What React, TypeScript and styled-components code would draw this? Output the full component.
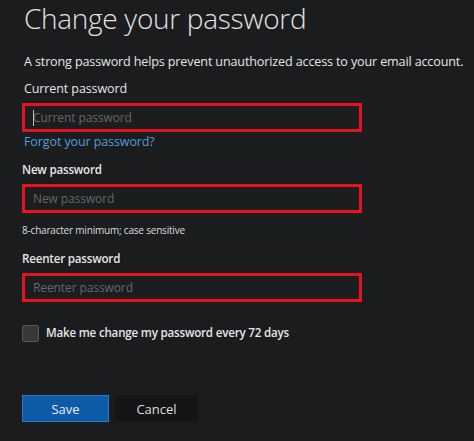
import styled, { createGlobalStyle } from 'styled-components';

const GlobalStyle = createGlobalStyle`
  html, body {
    margin: 0;
    padding: 0;
    background: #1b1c1e;
  }
  body {
    font-family: 'Open Sans', 'Noto Sans', sans-serif;
    color: #e4e4e4;
  }
`;

const App = () => {
  return (
    <>
      <GlobalStyle />
      <Page>
        <Title>Change your password</Title>
        <Description>
          A strong password helps prevent unauthorized access to your email account.
        </Description>

        <Label>Current password</Label>
        <Field>
          <Caret />
          <Input placeholder="Current password" type="password" />
        </Field>
        <ForgotLink href="#">Forgot your password?</ForgotLink>

        <Label $bold>New password</Label>
        <Field>
          <Input placeholder="New password" type="password" />
        </Field>
        <Hint>8-character minimum; case sensitive</Hint>

        <Label $bold>Reenter password</Label>
        <Field>
          <Input placeholder="Reenter password" type="password" />
        </Field>

        <CheckRow>
          <CheckBox />
          <CheckText>Make me change my password every 72 days</CheckText>
        </CheckRow>

        <ButtonRow>
          <Button $primary>Save</Button>
          <Button>Cancel</Button>
        </ButtonRow>
      </Page>
    </>
  );
};

const Page = styled.div`
  width: 474px;
  height: 441px;
  box-sizing: border-box;
  padding: 1px 0 0 22px;
  display: flex;
  flex-direction: column;
  align-items: flex-start;
  overflow: hidden;
`;

const Title = styled.h1`
  margin: 0 0 0 2px;
  font-size: 28px;
  line-height: 34px;
  font-weight: 300;
  color: #e2e2e2;
  letter-spacing: -0.3px;
  white-space: nowrap;
`;

const Description = styled.p`
  margin: 18px 0 0 2px;
  font-size: 12.6px;
  line-height: 18px;
  color: #e6e6e6;
  letter-spacing: -0.15px;
  white-space: nowrap;
`;

const Label = styled.div<{ $bold?: boolean }>`
  margin: ${p => (p.$bold ? '10px' : '9px')} 0 0 ${p => (p.$bold ? '0' : '2px')};
  font-size: ${p => (p.$bold ? '11.6px' : '12.5px')};
  line-height: 18px;
  font-weight: ${p => (p.$bold ? 600 : 400)};
  color: #e6e6e6;
  letter-spacing: ${p => (p.$bold ? '-0.2px' : '-0.1px')};
`;

const Field = styled.div`
  position: relative;
  margin-top: 5px;
  width: 340px;
  height: 29px;
  box-sizing: border-box;
  border: 3px solid #e3141f;
  background: #1c1d1f;
  display: flex;
  align-items: center;
`;

const Caret = styled.span`
  position: absolute;
  left: 8px;
  top: 4px;
  width: 1px;
  height: 16px;
  background: #bdbdbd;
`;

const Input = styled.input`
  width: 100%;
  height: 100%;
  box-sizing: border-box;
  border: none;
  outline: none;
  background: transparent;
  padding: 0 0 0 8px;
  font-family: 'Open Sans', 'Noto Sans', sans-serif;
  font-size: 12px;
  letter-spacing: -0.1px;
  color: #e6e6e6;

  &::placeholder {
    color: #66676a;
  }
`;

const ForgotLink = styled.a`
  margin: 1px 0 0 2px;
  font-size: 12.5px;
  line-height: 18px;
  color: #4f9fdc;
  text-decoration: none;
  letter-spacing: -0.1px;
`;

const Hint = styled.div`
  margin: 10px 0 3px;
  font-size: 10px;
  line-height: 14px;
  letter-spacing: -0.2px;
  color: #dcdcdc;
`;

const CheckRow = styled.div`
  margin-top: 22px;
  display: flex;
  align-items: center;
  gap: 7px;
`;

const CheckBox = styled.span`
  width: 17px;
  height: 17px;
  box-sizing: border-box;
  border: 1px solid #555658;
  border-radius: 2px;
  background: #38393b;
`;

const CheckText = styled.span`
  font-size: 11.6px;
  line-height: 18px;
  font-weight: 600;
  letter-spacing: -0.2px;
  color: #e6e6e6;
`;

const ButtonRow = styled.div`
  margin-top: 53px;
  display: flex;
  gap: 6px;
`;

const Button = styled.button<{ $primary?: boolean }>`
  width: ${p => (p.$primary ? '87px' : '83px')};
  height: 27px;
  box-sizing: border-box;
  border: 1px solid ${p => (p.$primary ? '#2b79c6' : '#161719')};
  background: ${p => (p.$primary ? '#0e5aa6' : '#141517')};
  color: ${p => (p.$primary ? '#e8eef6' : '#dedede')};
  font-family: 'Open Sans', 'Noto Sans', sans-serif;
  font-size: 13px;
  padding: 0;
  cursor: pointer;
`;

export default App;
